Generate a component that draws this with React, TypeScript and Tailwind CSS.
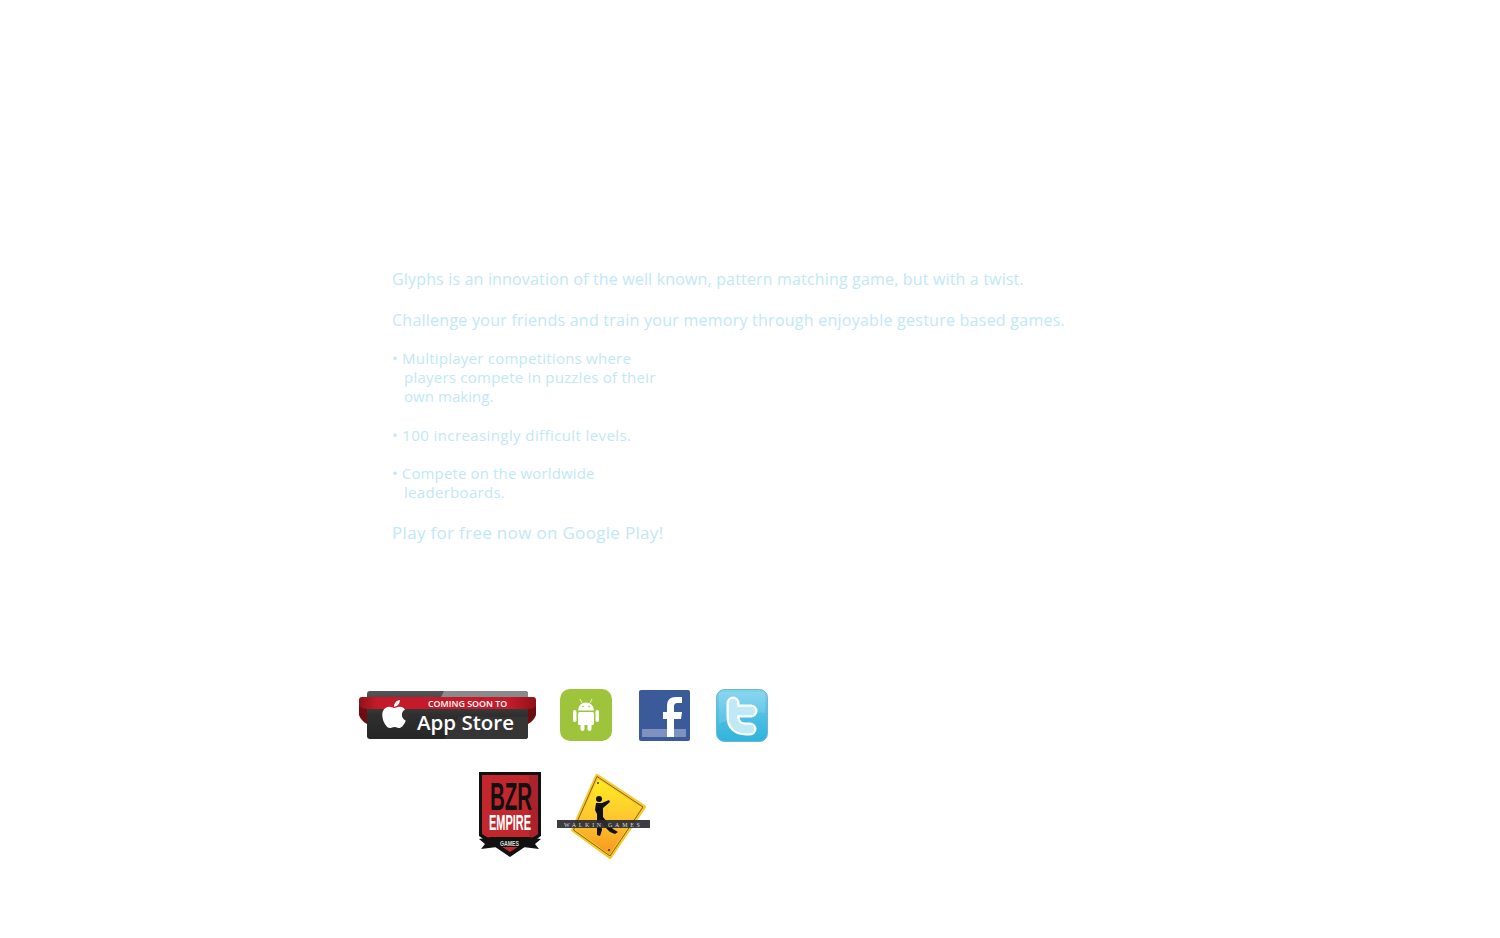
import React from 'react';
import { FaApple } from 'react-icons/fa';

const AppStoreBadge: React.FC = () => (
  <svg width="178" height="52" viewBox="0 0 178 52" className="shrink-0">
    <defs>
      <linearGradient id="badgeBody" x1="0" y1="0" x2="0" y2="1">
        <stop offset="0" stopColor="#555" />
        <stop offset="0.5" stopColor="#2f2f2f" />
        <stop offset="1" stopColor="#262626" />
      </linearGradient>
      <linearGradient id="ribbon" x1="0" y1="0" x2="1" y2="0">
        <stop offset="0" stopColor="#8f1218" />
        <stop offset="0.1" stopColor="#c41a2a" />
        <stop offset="0.85" stopColor="#c41a2a" />
        <stop offset="1" stopColor="#8f1218" />
      </linearGradient>
    </defs>
    <rect x="8" y="2" width="161" height="48" rx="3" fill="url(#badgeBody)" />
    <path d="M85 2 H166 a3 3 0 0 1 3 3 V8 H82 Z" fill="#8a8a8a" />
    <path d="M85 50 L100 28 H169 V47 a3 3 0 0 1 -3 3 Z" fill="#353535" />
    <path d="M8 19 V35 C4 33 1 29 0 26 V14 Z" fill="#6d0d12" />
    <path d="M169 19 V35 C173 33 176 29 177 26 V14 Z" fill="#6d0d12" />
    <path d="M3 8 H174 a3 3 0 0 1 3 3 V17 C175 19 172 20 169 20 H8 C5 20 2 19 0 17 V11 a3 3 0 0 1 3 -3 Z" fill="url(#ribbon)" />
    <FaApple x="19" y="9" size={32} color="#ffffff" />
    <text x="69" y="18" fill="#fff" fontSize="8.900" fontWeight="600" fontFamily="'Open Sans', sans-serif">COMING SOON TO</text>
    <text x="58" y="41" fill="#fff" fontSize="20.500" fontWeight="600" fontFamily="'Open Sans', sans-serif">App Store</text>
  </svg>
);

const AndroidIcon: React.FC = () => (
  <svg width="54" height="54" viewBox="0 0 54 54" className="shrink-0">
    <rect x="1" y="1" width="52" height="52" rx="10" fill="#9dc43b" />
    <g fill="#fff">
      <path d="M19 22.500 a8 8 0 0 1 16 0 Z" />
      <rect x="19" y="24" width="16" height="13" rx="1.500" />
      <rect x="14" y="22" width="3.500" height="12" rx="1.700" />
      <rect x="36.500" y="22" width="3.500" height="12" rx="1.700" />
      <rect x="21.500" y="35" width="4" height="8" rx="2" />
      <rect x="28.500" y="35" width="4" height="8" rx="2" />
    </g>
    <path d="M23 15 L21 11 M31 15 L33 11" stroke="#fff" strokeWidth="0.800" />
    <circle cx="24" cy="18.500" r="0.800" fill="#9dc43b" />
    <circle cx="30" cy="18.500" r="0.800" fill="#9dc43b" />
  </svg>
);

const FacebookIcon: React.FC = () => (
  <svg width="52" height="52" viewBox="0 0 52 52" className="shrink-0">
    <rect x="0" y="0" width="51" height="51" rx="2" fill="#3b5a99" />
    <rect x="3" y="39" width="44" height="8" fill="#7d92bf" />
    <path d="M28 47 V29 H24 V22 H28 V16 C28 10 31 7 37 7 H43 V13 H39 C36 13 35 14 35 17 V22 H43 L42 29 H35 V47 Z" fill="#fff" />
  </svg>
);

const TwitterIcon: React.FC = () => (
  <svg width="52" height="54" viewBox="0 0 52 54" className="shrink-0">
    <defs>
      <linearGradient id="tw" x1="0" y1="0" x2="0" y2="1">
        <stop offset="0" stopColor="#7dd2ee" />
        <stop offset="0.5" stopColor="#4fbfe4" />
        <stop offset="1" stopColor="#2fb4dc" />
      </linearGradient>
    </defs>
    <rect x="0.500" y="0.500" width="51" height="52" rx="8" fill="url(#tw)" stroke="#6fb6d2" />
    <path d="M3 3 H49 V24 C30 22 18 28 3 35 Z" fill="#fff" opacity="0.12" />
    <path d="M17 14 V28 C17 36 22 40 30 40 H34 M17 22 H35" fill="none" stroke="#fff" strokeWidth="13" strokeLinecap="round" />
    <path d="M17 14 V28 C17 36 22 40 30 40 H34 M17 22 H35" fill="none" stroke="#bfe9f6" strokeWidth="8.500" strokeLinecap="round" />
  </svg>
);

const BzrLogo: React.FC = () => (
  <svg width="62" height="86" viewBox="0 0 62 86" className="shrink-0">
    <path d="M0 0 H62 V64 L31 85 L0 64 Z" fill="#111" />
    <path d="M3 3 H59 V62 L31 80 L3 62 Z" fill="#c1272d" />
    <path d="M50 3 H59 V62 L50 68 Z" fill="#ab212c" />
    <text transform="translate(11,38) scale(0.54,1)" fontSize="38" fontWeight="700" fontFamily="'Liberation Sans', sans-serif" fill="#111">BZR</text>
    <text transform="translate(10,58) scale(0.5,1)" fontSize="22" fontWeight="700" fontFamily="'Liberation Sans', sans-serif" fill="#fff">EMPIRE</text>
    <path d="M0 67 L12 65 H50 L62 67 L56 72 L60 77 L44 75 H18 L2 77 L6 72 Z" fill="#111" />
    <text transform="translate(21,74) scale(0.74,1)" fontSize="7" fontWeight="700" fontFamily="'Liberation Sans', sans-serif" fill="#ddd">GAMES</text>
  </svg>
);

const WalkinLogo: React.FC = () => (
  <svg width="93" height="88" viewBox="0 0 93 88" className="shrink-0">
    <defs>
      <linearGradient id="sign" x1="0" y1="0" x2="0" y2="1">
        <stop offset="0" stopColor="#fff01f" />
        <stop offset="0.5" stopColor="#fdc82f" />
        <stop offset="1" stopColor="#f7941e" />
      </linearGradient>
    </defs>
    <path d="M40 3 L87 34 L53 84 L16 57 Z" fill="url(#sign)" stroke="#f9c62c" strokeWidth="4" strokeLinejoin="round" />
    <path d="M40 3.500 L86 34 L53 83 L16.500 57 Z" fill="none" stroke="#4a3b08" strokeWidth="0.700" strokeLinejoin="round" />
    <circle cx="41" cy="10" r="1" fill="#333" />
    <circle cx="52" cy="77" r="1" fill="#333" />
    <circle cx="42" cy="26" r="3" fill="#111" />
    <path d="M39 30 L45 30 L52 27 L53 29 L46 35 L46 44 L56 56 L61 59 L58 61 L53 59 L44 50 L45 57 L43 63 L40 62 L40 50 L40 41 L38 37 Z" fill="#111" />
    <rect x="0" y="47" width="93" height="8" fill="#2b2d33" fillOpacity="0.92" />
    <text x="7" y="53.500" fontSize="6" fontFamily="'Liberation Serif', serif" fill="#d8dde2" letterSpacing="2.700">WALKIN GAMES</text>
  </svg>
);

const App: React.FC = () => {
  return (
    <div className="min-h-[938px] bg-white pt-[269px] font-['Open_Sans',sans-serif] text-[#bfe8f8]">
      <div className="ml-[392px]">
        <p className="h-[20px] text-[16px] leading-[20px] tracking-[0.165px]">Glyphs is an innovation of the well known, pattern matching game, but with a twist.</p>
        <p className="mt-[21px] h-[20px] text-[16px] leading-[20px] tracking-[0.25px]">Challenge your friends and train your memory through enjoyable gesture based games.</p>
        <ul className="mt-[19px] text-[15px] leading-[19px]">
          <li className="tracking-[0.24px]">
            • Multiplayer competitions where
            <div className="pl-[12px]">players compete in puzzles of their</div>
            <div className="pl-[12px] tracking-[0.05px]">own making.</div>
          </li>
          <li className="mt-[20px] tracking-[0.4px]">• 100 increasingly difficult levels.</li>
          <li className="mt-[19px] tracking-[0.14px]">
            • Compete on the worldwide
            <div className="pl-[12px] tracking-[0.3px]">leaderboards.</div>
          </li>
        </ul>
        <p className="mt-[21px] h-[20px] text-[17px] leading-[20px] tracking-[0.32px]">Play for free now on Google Play!</p>
      </div>
      <div className="mt-[146px] ml-[359px] flex items-start">
        <AppStoreBadge />
        <div className="ml-[22px] -mt-[1px]"><AndroidIcon /></div>
        <div className="ml-[26px] mt-[1px]"><FacebookIcon /></div>
        <div className="ml-[25px]"><TwitterIcon /></div>
      </div>
      <div className="mt-[29px] ml-[479px] flex items-start gap-[16px]">
        <BzrLogo />
        <div className="mt-[1px]"><WalkinLogo /></div>
      </div>
    </div>
  );
};

export default App;
